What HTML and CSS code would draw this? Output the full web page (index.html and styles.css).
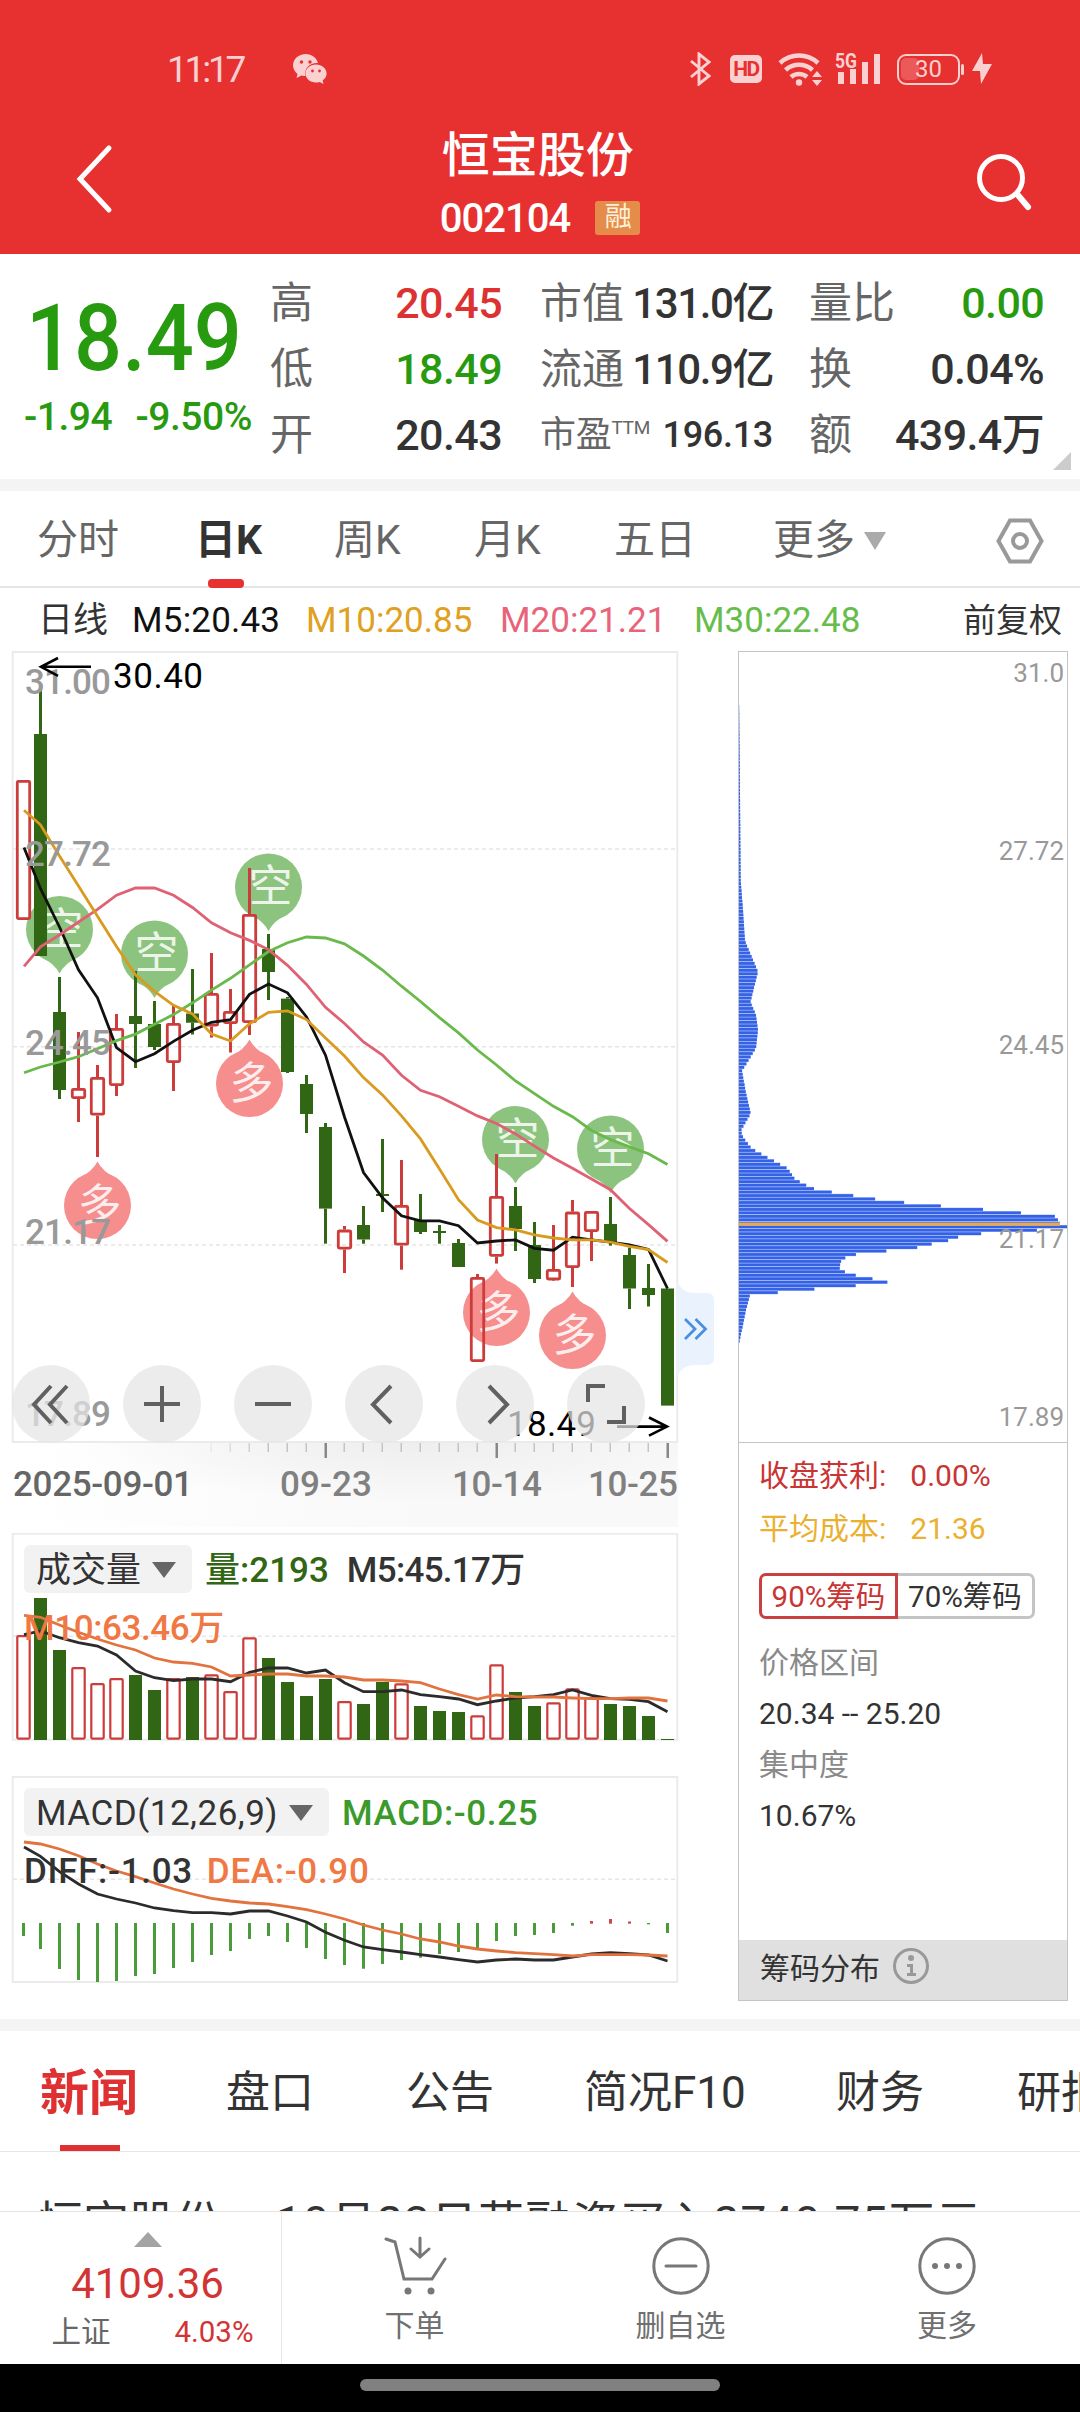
FILE: index.html
```html
<!DOCTYPE html>
<html lang="zh-CN">
<head>
  <meta charset="utf-8">
  <meta name="viewport" content="width=1080">
  <title>恒宝股份 002104</title>
  <link rel="stylesheet" href="styles.css">
</head>
<body>
  <header class="header">
    <div class="status">
      <span class="clock">11:17</span>
      <svg class="wechat" width="34" height="30" viewBox="0 0 34 30">
        <path d="M13 0C5.500 0 0 5 0 11.500c0 3.500 2 6.500 4.500 8.500L3.500 24l5-2.500c1.500.4 3 .5 4 .5C11 14 17 8.500 25 9 23.500 3.500 18.500 0 13 0z"/>
        <path d="M23 10.500c-6 0-10.500 4-10.500 9s4.500 9 10.500 9c1.300 0 2.500-.2 3.600-.6l4 2.100-1-3.500c2.500-1.700 4-4.200 4-7 0-5-4.600-9-10.600-9z"/>
        <g class="eye"><circle cx="8.500" cy="8" r="1.700"/><circle cx="17" cy="8" r="1.700"/><circle cx="19.500" cy="17" r="1.400"/><circle cx="26.500" cy="17" r="1.400"/></g>
      </svg>
      <div class="status-icons">
        <svg width="22" height="34" viewBox="0 0 22 34"><path class="line" d="M1 9l18 15-10 8V2l10 8L1 25" stroke-width="2.900"/></svg>
        <span class="hd">HD</span>
        <svg width="46" height="36" viewBox="0 0 46 36">
          <g class="line" stroke-width="4.600"><path d="M2 12a28 28 0 0 1 38 0"/><path d="M7.500 19a20 20 0 0 1 27 0"/><path d="M13 26a12 12 0 0 1 16 0"/></g>
          <circle cx="21" cy="31.500" r="3.200"/>
          <path d="M34 26l5-6 5 6zM34 29h10l-5 6z"/>
        </svg>
        <svg class="signal" width="47" height="34" viewBox="0 0 47 34">
          <text x="0" y="15.500" textLength="22" lengthAdjust="spacingAndGlyphs">5G</text>
          <path d="M3 20h6v12H3zM15 17h6v15h-6zM27 10h6v22h-6zM39 2h6v30h-6z"/>
        </svg>
        <span class="battery"><i></i>30</span>
        <svg width="20" height="32" viewBox="0 0 20 32"><path d="M10 0L0 18h8l1 13L20 11h-9z"/></svg>
      </div>
    </div>
    <div class="titlebar">
      <svg class="back" width="40" height="70" viewBox="0 0 40 70"><path d="M34 4L5 35l29 31"/></svg>
      <div class="title">
        <h1>恒宝股份</h1>
        <div class="code">002104 <span class="tag">融</span></div>
      </div>
      <svg class="search" width="56" height="58" viewBox="0 0 56 58"><circle cx="24" cy="24" r="21.500"/><path d="M40 40l11 13" stroke-width="6"/></svg>
    </div>
  </header>

  <section class="quote">
    <div class="price">
      <div class="last"><span>18.49</span></div>
      <div class="change"><span>-1.94</span><span>-9.50%</span></div>
    </div>
    <dl>
      <dt>高</dt><dd class="up">20.45</dd>
      <dt>低</dt><dd class="down">18.49</dd>
      <dt>开</dt><dd>20.43</dd>
    </dl>
    <dl class="mid">
      <dt>市值</dt><dd>131.0亿</dd>
      <dt>流通</dt><dd>110.9亿</dd>
      <dt class="small">市盈<sup>TTM</sup></dt><dd class="small">196.13</dd>
    </dl>
    <dl>
      <dt>量比</dt><dd class="down">0.00</dd>
      <dt>换</dt><dd>0.04%</dd>
      <dt>额</dt><dd>439.4万</dd>
    </dl>
  </section>

  <nav class="periods">
    <span>分时</span>
    <span class="active">日K</span>
    <span>周K</span>
    <span>月K</span>
    <span>五日</span>
    <span>更多<i class="caret"></i></span>
    <svg width="48" height="46" viewBox="0 0 48 46"><path d="M14 2.500h20L45.500 23 34 43.500H14L2.500 23z"/><circle cx="24" cy="23" r="7"/></svg>
  </nav>

  <div class="ma">
    <span>日线</span>
    <span class="m5">M5:20.43</span>
    <span class="m10">M10:20.85</span>
    <span class="m20">M20:21.21</span>
    <span class="m30">M30:22.48</span>
    <span class="adjust">前复权</span>
  </div>

  <main class="charts">
    <div class="left">
      <div class="kline">
        <div class="axis-bg"></div>
        <svg id="kline" width="720" height="876" viewBox="0 651 720 876"></svg>
        <div class="controls">
          <button><svg viewBox="0 0 78 78"><path d="M39 21L22 39.500 39 58M55 21L38 39.500 55 58"/></svg></button>
          <button><svg viewBox="0 0 78 78"><path d="M39 21v36M21 39h36"/></svg></button>
          <button><svg viewBox="0 0 78 78"><path d="M21 39h36"/></svg></button>
          <button><svg viewBox="0 0 78 78"><path d="M46 21L28 39.500 46 58"/></svg></button>
          <button><svg viewBox="0 0 78 78"><path d="M33 21l18 18.500L33 58"/></svg></button>
          <button><svg viewBox="0 0 78 78"><path d="M21 37V21h17M57 41v16H40"/></svg></button>
        </div>
        <svg class="expand" width="38" height="96" viewBox="0 0 38 96"><path class="bg" d="M0 0c4 8 8 12 18 12h12q7 0 7 7v58q0 7-7 7H18C8 84 4 88 0 96z"/><path class="arrows" d="M8 38l10 10-10 10M18.500 38l10 10-10 10"/></svg>
      </div>
      <div class="panel volume">
        <svg id="volume" width="720" height="210" viewBox="0 1533 720 210"></svg>
        <div class="row"><span class="chip">成交量<i class="caret"></i></span><span class="vol">量:2193</span><span class="vol-m5">M5:45.17万</span></div>
        <div class="row second"><span class="orange">M10:63.46万</span></div>
      </div>
      <div class="panel macd">
        <svg id="macd" width="720" height="210" viewBox="0 1776 720 210"></svg>
        <div class="row"><span class="chip">MACD(12,26,9)<i class="caret"></i></span><span class="macd-value">MACD:-0.25</span></div>
        <div class="row second"><span>DIFF:-1.03</span><span class="orange">DEA:-0.90</span></div>
      </div>
    </div>
    <aside class="chips">
      <svg id="chips" width="328" height="790" viewBox="739 652 328 790"></svg>
      <div class="stats">
        <p class="profit">收盘获利:<b>0.00%</b></p>
        <p class="cost">平均成本:<b>21.36</b></p>
        <div class="toggle"><span class="on">90%筹码</span><span>70%筹码</span></div>
        <p class="label">价格区间</p>
        <p>20.34 -- 25.20</p>
        <p class="label">集中度</p>
        <p>10.67%</p>
      </div>
      <footer>筹码分布
        <svg width="38" height="38" viewBox="0 0 38 38"><circle class="ring" cx="19" cy="19" r="16.500"/><circle cx="19" cy="11" r="3"/><path d="M15 17h6v9h3v3h-9v-3h3v-6h-3z"/></svg>
      </footer>
    </aside>
  </main>

  <nav class="news-tabs">
    <span class="active">新闻</span>
    <span>盘口</span>
    <span>公告</span>
    <span>简况F10</span>
    <span>财务</span>
    <span>研报</span>
  </nav>
  <div class="headline">恒宝股份，<span>10月23日获融资买入2740.75万元</span></div>

  <footer class="bottom">
    <div class="index">
      <i class="caret-up"></i>
      <strong>4109.36</strong>
      <div><span>上证</span><em>4.03%</em></div>
    </div>
    <div class="action">
      <svg width="64" height="60" viewBox="0 0 64 60"><path d="M3 3l9 3 9 37h28l13-20M37 2v18M28 13l9 8 9-8"/><circle class="dot" cx="25" cy="55" r="3.500"/><circle class="dot" cx="48" cy="55" r="3.500"/></svg>
      <span>下单</span>
    </div>
    <div class="action">
      <svg width="60" height="60" viewBox="0 0 60 60"><circle cx="30" cy="30" r="27.200"/><path d="M15 30h30"/></svg>
      <span>删自选</span>
    </div>
    <div class="action">
      <svg width="60" height="60" viewBox="0 0 60 60"><circle cx="30" cy="30" r="27.200"/><g class="dot"><circle cx="18" cy="30" r="3"/><circle cx="30" cy="30" r="3"/><circle cx="42" cy="30" r="3"/></g></svg>
      <span>更多</span>
    </div>
  </footer>
  <div class="gesture"><i></i></div>
  <script src="chart.js"></script>
</body>
</html>
```
FILE: styles.css
```css
* {
  box-sizing: border-box;
}
html,body {
  margin: 0;
  padding: 0;
}
body {
  display: flex;
  flex-direction: column;
  width: 1080px;
  height: 2412px;
  overflow: hidden;
  font-family: Roboto, "Noto Sans CJK SC", sans-serif;
  color: #333;
  background: #fff;
}
svg {
  display: block;
  flex: none;
}
span {
  white-space: nowrap;
}
.caret {
  display: inline-block;
  border: solid transparent;
  border-top-color: #666;
}

/* header */
.header {
  height: 254px;
  flex: none;
  color: #fff;
  background: #e73030;
}
.status {
  display: flex;
  align-items: center;
  height: 90px;
  padding: 48px 0 0 167px;
  color: #fbd0d0;
}
.status svg {
  fill: #fbd0d0;
}
.status .line {
  fill: none;
  stroke: #fbd0d0;
}
.clock {
  width: 126px;
  font-size: 37px;
  letter-spacing: -3.2px;
}
.wechat .eye {
  fill: #e73030;
}
.status-icons {
  display: flex;
  align-items: center;
  margin-left: 363px;
}
.hd {
  width: 32px;
  height: 28px;
  margin: 0 16px 0 18px;
  border-radius: 5px;
  font: 700 21px/28px Roboto;
  letter-spacing: -1.5px;
  text-align: center;
  color: #e73030;
  background: #fbd0d0;
}
.signal {
  margin: 0 15px 0 11px;
}
.signal text {
  font: 700 20px Roboto;
}
.battery {
  position: relative;
  width: 63px;
  height: 31px;
  margin-right: 12px;
  border: 2px solid #fbd0d0;
  border-radius: 9px;
  font-size: 24px;
  line-height: 27px;
  text-align: center;
}
.battery i {
  position: absolute;
  left: 2px;
  top: 2px;
  width: 18px;
  height: 22px;
  border-radius: 5px;
  background: rgba(255,255,255,.2);
}
.battery::after {
  content: "";
  position: absolute;
  right: -6px;
  top: 8px;
  width: 3px;
  height: 11px;
  border-radius: 2px;
  background: #fbd0d0;
}
.titlebar {
  display: flex;
  justify-content: space-between;
  height: 164px;
  padding: 0 47px 0 75px;
}
.titlebar>svg {
  fill: none;
  stroke: #fff;
  stroke-width: 5;
  stroke-linecap: round;
}
.back {
  margin-top: 54px;
}
.search {
  margin-top: 64px;
}
.title {
  margin-top: 34px;
  padding-right: 10px;
}
h1 {
  margin: 0;
  font-size: 48px;
  font-weight: 500;
  line-height: 64px;
}
.code {
  display: flex;
  align-items: center;
  height: 60px;
  margin-left: -2px;
  font-size: 40px;
  font-weight: 500;
  letter-spacing: -1px;
}
.tag {
  width: 45px;
  height: 34px;
  margin-left: 25px;
  border-radius: 3px;
  font-size: 27px;
  font-weight: 400;
  line-height: 33px;
  text-align: center;
  color: #fff2dc;
  background: #e68c4a;
}

/* quote */
.quote {
  position: relative;
  display: flex;
  height: 237px;
  flex: none;
  padding-top: 16px;
  border-bottom: 12px solid #f4f4f4;
}
.quote::after {
  content: "";
  position: absolute;
  right: 9px;
  bottom: 9px;
  border: 9px solid transparent;
  border-right-color: #ccc;
  border-bottom-color: #ccc;
}
.price {
  width: 271px;
  color: #279a10;
}
.last {
  height: 108px;
  padding: 15px 0 0 26px;
  font-size: 92px;
  font-weight: 500;
  line-height: 108px;
}
.last span {
  display: inline-block;
  transform: scaleX(.92);
  transform-origin: 0 50%;
}
.change {
  display: flex;
  justify-content: space-between;
  padding: 16px 18px 0 24px;
  font-size: 39px;
  font-weight: 500;
  line-height: 46px;
  letter-spacing: -.5px;
}
.quote dl {
  display: grid;
  grid-template-columns: auto auto;
  grid-auto-rows: 66px;
  justify-content: space-between;
  width: 232px;
  margin: 0 39px 0 0;
  font-size: 43px;
  line-height: 67px;
}
.quote .mid {
  grid-template-columns: 80px 152px;
  margin-right: 37px;
}
.quote dt {
  white-space: nowrap;
  color: #666;
}
.quote dd {
  margin: 0 -1px 0 0;
  font-size: 43px;
  font-weight: 500;
  text-align: right;
  letter-spacing: -.6px;
  white-space: nowrap;
}
.quote .mid dt {
  font-size: 42px;
}
.quote .mid dd {
  font-size: 42px;
  letter-spacing: -1.4px;
}
.quote .mid .small {
  font-size: 36px;
  letter-spacing: -.3px;
}
.small sup {
  font-size: 19px;
  line-height: 1;
  vertical-align: 13px;
}
.quote .up {
  color: #dc3232;
}
.quote .down {
  color: #279a10;
}

/* period tabs */
.periods {
  display: grid;
  grid-template-columns: 158px 139px 140px 140px 159px 223px auto;
  align-items: center;
  height: 97px;
  flex: none;
  padding: 0 35px 0 37px;
  border-bottom: 2px solid #e6e6e6;
  font-size: 41px;
  line-height: 99px;
  color: #666;
}
.periods .active {
  position: relative;
  font-weight: 700;
  color: #333;
}
.periods .active::after {
  content: "";
  position: absolute;
  left: 13px;
  bottom: 2px;
  width: 36px;
  height: 9px;
  border-radius: 4px;
  background: #e73030;
}
.periods .caret {
  margin-left: 9px;
  border-width: 18px 11px 0;
  border-top-color: #aaa;
  vertical-align: 4px;
}
.periods svg {
  fill: none;
  stroke: #999;
  stroke-width: 4;
}
.ma {
  display: flex;
  height: 63px;
  flex: none;
  padding: 0 18px 0 38px;
  font-size: 35px;
  line-height: 65px;
}
.ma .m5 {
  width: 149px;
  margin: 0 25px 0 24px;
  letter-spacing: .2px;
  color: #111;
}
.ma .m10 {
  width: 170px;
  margin-right: 24px;
  color: #e0a020;
}
.ma .m20 {
  width: 170px;
  margin-right: 24px;
  color: #e8647a;
}
.ma .m30 {
  color: #67bd4b;
}
.ma .adjust {
  margin-left: auto;
  font-size: 33px;
}

/* charts */
.charts {
  display: flex;
  height: 1380px;
  flex: none;
  border-bottom: 12px solid #f4f4f4;
}
.left {
  width: 738px;
}
.kline {
  position: relative;
  height: 882px;
}
#kline {
  position: relative;
}
.axis-bg {
  position: absolute;
  left: 12px;
  top: 791px;
  width: 666px;
  height: 85px;
  background:
    radial-gradient(ellipse 330px 60px at 400px 0, #eee, rgba(240,240,240,0)),
    linear-gradient(90deg, #fff, #f9f9f9 60%);
}
.controls {
  position: absolute;
  left: 12px;
  top: 714px;
  display: flex;
  gap: 33px;
}
.controls button {
  width: 78px;
  height: 78px;
  padding: 0;
  border: 0;
  border-radius: 50%;
  background: rgba(229,229,229,.72);
}
.controls path {
  fill: none;
  stroke: #606060;
  stroke-width: 4;
}
.expand {
  position: absolute;
  left: 677px;
  top: 630px;
}
.expand .bg {
  fill: #eaf3fd;
}
.expand .arrows {
  fill: none;
  stroke: #4a90e2;
  stroke-width: 2.8;
}
.panel {
  position: relative;
  height: 208px;
  padding: 12px 0 0 24px;
}
.panel>svg {
  position: absolute;
  left: 0;
  top: 0;
}
.macd {
  margin-top: 35px;
}
.row {
  position: relative;
  display: flex;
  height: 48px;
  font-size: 35px;
  font-weight: 500;
  line-height: 51px;
}
.row.second {
  margin-top: 10px;
  gap: 14px;
  letter-spacing: -.4px;
}
.chip {
  height: 48px;
  margin-right: 13px;
  padding: 0 16px 0 12px;
  border-radius: 6px;
  font-weight: 400;
  background: #f2f2f2;
}
.chip .caret {
  margin-left: 11px;
  border-width: 16px 12px 0;
  vertical-align: 4px;
}
.vol {
  margin-right: 18px;
  color: #316614;
}
.vol-m5 {
  letter-spacing: -.7px;
}
.macd .chip {
  letter-spacing: .5px;
}
.macd-value {
  letter-spacing: .6px;
  color: #3a9a2a;
}
.macd .second {
  letter-spacing: .7px;
}
.orange {
  color: #ef7844;
}
#kline .axis {
  font: 500 35px Roboto;
  fill: #999;
}
#kline .date {
  font: 500 35px Roboto;
  fill: #808080;
}
#kline .date.first {
  fill: #666;
}
#kline .extreme {
  font: 400 35px Roboto;
  fill: #000;
}
#kline .mark {
  font: 400 44px "Noto Sans CJK SC";
  fill: #fff;
  fill-opacity: .85;
  text-anchor: middle;
}
#chips text {
  font: 400 26px Roboto;
  fill: #999;
  text-anchor: end;
}

/* cost distribution */
.chips {
  display: flex;
  flex-direction: column;
  width: 330px;
  height: 1350px;
  border: 1px solid #c4c4c4;
}
.stats {
  flex: 1;
  padding: 7px 0 0 20px;
  border-top: 1px solid #c4c4c4;
  font-size: 30px;
}
.stats p {
  height: 51px;
  margin: 0;
  line-height: 51px;
}
.stats .profit,.stats .cost {
  height: 53px;
}
.stats b {
  margin-left: 24px;
  font-weight: 400;
}
.profit {
  color: #c93434;
}
.cost {
  color: #eab02f;
}
.stats .label {
  color: #8a8a8a;
}
.toggle {
  display: flex;
  width: 276px;
  height: 46px;
  margin: 17px 0 18px;
  font-size: 29.5px;
}
.toggle span {
  width: 138px;
  border: 3px solid #c4c4c4;
  border-left: 0;
  border-radius: 0 7px 7px 0;
  line-height: 42px;
  text-align: center;
}
.toggle .on {
  width: 140px;
  border: 3px solid #c84040;
  border-radius: 7px 0 0 7px;
  color: #c93434;
}
.chips footer {
  display: flex;
  align-items: center;
  gap: 12px;
  height: 60px;
  padding: 0 0 9px 21px;
  font-size: 30px;
  background: #e0e0e0;
}
.chips footer svg {
  fill: #999;
}
.chips footer .ring {
  fill: none;
  stroke: #999;
  stroke-width: 3;
}

/* news */
.news-tabs {
  display: grid;
  grid-template-columns: 186px 180px 178px 252px 181px auto;
  grid-template-rows: 120px;
  height: 121px;
  flex: none;
  padding-left: 40px;
  border-bottom: 1px solid #e6e6e6;
  font-size: 44px;
  line-height: 125px;
}
.news-tabs .active {
  position: relative;
  font-size: 49px;
  font-weight: 700;
  color: #df3131;
}
.news-tabs .active::after {
  content: "";
  position: absolute;
  left: 20px;
  bottom: 0;
  width: 60px;
  height: 6px;
  background: #df3131;
}
.headline {
  height: 59px;
  flex: none;
  padding: 41px 0 0 37px;
  font-size: 46px;
  line-height: 60px;
  white-space: nowrap;
  overflow: hidden;
}
.headline span {
  margin-left: 9px;
  letter-spacing: 1.1px;
}

/* bottom bar */
.bottom {
  display: grid;
  grid-template-columns: 282px 265px 267px 266px;
  height: 153px;
  flex: none;
  border-top: 1px solid #e4e4e4;
  background: #fff;
}
.index {
  display: flex;
  flex-direction: column;
  align-items: center;
  padding-top: 20px;
  border-right: 1px solid #e8e8e8;
  color: #d23434;
}
.caret-up {
  margin-left: 14px;
  border: 14px solid transparent;
  border-top: 0;
  border-bottom: 15px solid #a4a4a4;
}
.index strong {
  margin: 13px 0 0 14px;
  font-size: 42px;
  font-weight: 400;
  line-height: 48px;
}
.index div {
  display: flex;
  justify-content: space-between;
  width: 202px;
  margin-left: 24px;
  font-size: 29.5px;
  line-height: 49px;
}
.index div span {
  color: #666;
}
.index em {
  font-style: normal;
}
.action {
  display: flex;
  flex-direction: column;
  align-items: center;
  padding-top: 24px;
  font-size: 30px;
  line-height: 60px;
  color: #707070;
}
.action svg {
  fill: none;
  stroke: #777;
  stroke-width: 3;
  stroke-linecap: round;
}
.action .dot {
  fill: #777;
  stroke: none;
}
.gesture {
  display: flex;
  justify-content: center;
  height: 48px;
  flex: none;
  padding-top: 15px;
  background: #000;
}
.gesture i {
  width: 360px;
  height: 12px;
  border-radius: 6px;
  background: #808080;
}
```
FILE: chart.js
```js
var RED = '#cb3c3a', GREEN = '#316614';

function cx(i) {
  return i ? 21.5 + 19 * i : 23.5;
}
function points(ys) {
  return ys.map(function (y, i) { return (i ? cx(i) : 24) + ',' + y; }).join(' ');
}
function polyline(ys, color) {
  return '<polyline fill="none" stroke="' + color + '" stroke-width="2.8" points="' + points(ys) + '"/>';
}
function rect(x, y, w, h, attrs) {
  return '<rect x="' + x + '" y="' + y + '" width="' + w + '" height="' + h + '" ' + attrs + '/>';
}
function bar(i, top, bottom, red) {
  if (red) {
    return rect(cx(i) - 6.2, top + 1.4, 12.4, Math.max(bottom - top - 2.8, 1),
      'fill="none" stroke="' + RED + '" stroke-width="2.8" rx="1"');
  }
  return rect(cx(i) - 6.5, top, 13, bottom - top, 'fill="' + GREEN + '"');
}
function frame(y, h) {
  return rect(12.7, y, 664.6, h, 'fill="none" stroke="#ebebeb" stroke-width="2"');
}
function grid(y) {
  return '<path d="M13 ' + y + 'H677" stroke="#e6e6e6" stroke-width="1.5" stroke-dasharray="4 3"/>';
}
function text(x, y, s, cls, len) {
  return '<text x="' + x + '" y="' + y + '" class="' + cls + '"' +
    (len ? ' textLength="' + len + '"' : '') + '>' + s + '</text>';
}

// [high, body top, body bottom, low, is red]
var candles = [
  [780, 780, 920, 920, 1], [688, 734, 956, 956, 0], [977, 1012, 1090, 1099, 0], [1032, 1088, 1099, 1122, 1],
  [1065, 1077, 1115.6, 1157, 1], [1014, 1028, 1086, 1096, 1], [971, 1016, 1024, 1068, 0], [1001, 1024, 1047, 1050, 0],
  [1005, 1023, 1063, 1091, 1], [969, 1013.5, 1022.7, 1034.5, 0], [953, 993, 1026.5, 1037.6, 1], [989, 1011, 1024, 1052.5, 1],
  [868, 914, 1023, 1035, 1], [934, 949, 972, 1000, 0], [997, 998.6, 1072, 1073, 0], [1075, 1084, 1114, 1133, 0],
  [1123, 1127, 1208.6, 1243.7, 0], [1226, 1229.6, 1249.5, 1273, 1], [1206, 1225, 1239.5, 1243.7, 0], [1139, 1194, 1196, 1212, 0],
  [1160, 1205, 1245.6, 1269.7, 1], [1194, 1220, 1232, 1234, 0], [1225, 1231, 1233, 1243.7, 0], [1239, 1243, 1267, 1267, 0],
  [1274, 1277, 1362, 1362, 1], [1154, 1196, 1256.7, 1263.6, 1], [1187, 1206, 1229, 1251, 0], [1222, 1245, 1279, 1283, 0],
  [1225, 1269, 1280.4, 1281, 1], [1200, 1211.6, 1268, 1287, 1], [1211, 1211, 1232, 1261, 1], [1197, 1224, 1243, 1245.6, 0],
  [1247.5, 1255, 1288.5, 1309, 0], [1264, 1288, 1295, 1306.5, 0], [1288.5, 1288.5, 1405.6, 1405.6, 0]
];
var ma = {
  '#111111': [847.4,888.7,927,969.9,997.8,1047.5,1061.7,1053.7,1041.4,1030.3,1022.3,1019.6,994.3,984,992.8,1016.9,1055.2,1117,1172.5,1197.8,1215.8,1220.8,1220.8,1225.7,1243,1241,1239.9,1248.3,1250.2,1237.2,1239.9,1242.2,1244.9,1249.5,1288.5],
  '#69b94b': [1072.8,1067,1062,1056.7,1048.7,1040.6,1034.1,1024.2,1014.6,1002.8,990.1,978.3,964.9,951.5,942.7,937,938,943.8,956,970,986.2,1001.5,1017.6,1032.9,1050,1065,1081,1093.7,1106.3,1116.7,1130.5,1139.6,1146.9,1153.8,1164.5],
  '#df6274': [966.4,946.9,935,922,909.4,895.2,888,888,895.2,907.5,922.8,932.7,940.4,949.6,965.3,984.4,1007.3,1023.5,1042,1055,1075.3,1090.3,1096.8,1106.3,1115.9,1123.5,1133.9,1146.1,1158,1168.3,1179,1189.7,1208.5,1224.6,1241.4],
  '#d99a20': [810.3,824.8,856,886,916.3,946.5,974.8,991.3,1005.4,1013.9,1034,1041,1023.8,1012.3,1010.8,1019.6,1038,1056,1077.6,1094.9,1115.9,1138.9,1169,1199.7,1220,1227.6,1229.9,1234.9,1238,1239.9,1239.9,1242.2,1246.4,1249.5,1262.5]
};

// tip y; pins point down for 空, up for 多
function pin(i, tip, buy) {
  var x = cx(i), d = buy ? 1 : -1, cy = tip + 44 * d;
  return '<g fill="' + (buy ? '#f68e8e' : '#8cc47f') + '"><circle cx="' + x + '" cy="' + cy + '" r="33.5"/>' +
    '<path d="M' + (x - 19) + ' ' + (cy - 27 * d) + 'Q' + (x - 5) + ' ' + (tip + 10 * d) + ' ' + x + ' ' + tip +
    'Q' + (x + 5) + ' ' + (tip + 10 * d) + ' ' + (x + 19) + ' ' + (cy - 27 * d) + 'z"/></g>' +
    text(x + 2, cy + 15, buy ? '多' : '空', 'mark');
}

var k = frame(652, 790) + grid(849) + grid(1046.8) + grid(1244.9);
[[2, 973.5], [7, 998], [13, 931], [26, 1183.5], [31, 1193]].forEach(function (p) { k += pin(p[0], p[1], false); });
[[4, 1161.5], [12, 1039.5], [25, 1268.5], [29, 1291.5]].forEach(function (p) { k += pin(p[0], p[1], true); });
candles.forEach(function (c, i) {
  var color = c[4] ? RED : GREEN;
  k += rect(cx(i) - 1.5, c[0], 3, c[1] - c[0], 'fill="' + color + '"');
  k += rect(cx(i) - 1.5, c[2], 3, c[3] - c[2], 'fill="' + color + '"');
  k += bar(i, c[1], c[2], c[4]);
});
Object.keys(ma).forEach(function (color) { k += polyline(ma[color], color); });
[['31.00', 693.5], ['27.72', 866], ['24.45', 1055], ['21.17', 1244], ['17.89', 1425.5]].forEach(function (a) {
  k += text(25, a[1], a[0], 'axis', 86);
});
k += text(113, 688, '30.40', 'extreme', 90) + text(507, 1435.5, '18.49', 'extreme', 89);
k += '<path d="M91 666.800H41M58 658L41 666.800l17 9M617 1426.600h50M649 1417.500l18 9.100-18 9" fill="none" stroke="#000" stroke-width="2.600"/>';
for (var t = 10; t < 35; t++) {
  var major = t === 16 || t === 25 || t === 34;
  k += rect(cx(t) - 1, 1443, major ? 2.5 : 1.5, major ? 15 : 9,
    'fill="' + (major ? '#888' : '#c4c4c4') + '" opacity="' + Math.min(1, (t - 9) / 4) + '"');
}
k += text(13, 1495.5, '2025-09-01', 'date first', 180);
k += text(280, 1495.5, '09-23', 'date', 92) + text(452, 1495.5, '10-14', 'date', 90) + text(588, 1495.5, '10-25', 'date', 90);
document.getElementById('kline').innerHTML = k;

// negative tops are red bars
var volume = [-1634.7,1598,1650,-1666.7,-1682.7,-1677.7,1675,1690,-1677.7,1677,-1674,-1690.7,-1637,1658,1682,1696,1679,-1700.7,1704,1682,-1683,1706,1711,1712,-1715,-1664,1692,1706,-1702,-1688,-1696.7,1704,1706,1716,1739];
var v = frame(1533.7, 206) + grid(1636.3);
volume.forEach(function (y, i) { v += bar(i, Math.abs(y), 1740, y < 0).replace('stroke-width="2.8"', 'stroke-width="2.2"'); });
v += polyline([1634.7,1631,1637.7,1642.7,1646,1655,1671,1677.7,1680.7,1679,1679,1681.7,1672.3,1668,1668,1673,1670,1682.7,1691.7,1691.7,1690,1694.7,1696.7,1699,1704.7,1701,1698,1696.7,1694.7,1690,1695.3,1698.7,1699.3,1701.7,1711.7], '#2b2b2b');
v += polyline([1615.3,1617.3,1625,1632.3,1639,1645,1650,1658,1662,1663.3,1667,1676,1675,1674,1674,1676,1676,1677,1680,1680,1681,1682.7,1689,1694.7,1699,1695,1696.7,1697,1697,1698,1698.7,1698.7,1698,1698,1701], '#e2733f');
document.getElementById('volume').innerHTML = v;

var hist = [1936,1949,1969,1980,1982,1981,1976,1974,1968,1962,1955,1951,1939,1936,1942,1948,1959,1965,1968.7,1964,1960,1957.7,1954,1952,1950,1941,1936,1935,1933,1925.7,1921,1919,1921.5,1924.3,1933];
var m = frame(1777, 205) + grid(1879.3);
hist.forEach(function (y, i) {
  m += y < 1923 ? rect(cx(i) - 1.5, y, 3, 1923.7 - y, 'fill="#cb4a48"') : rect(cx(i) - 1.5, 1923, 3, y - 1923, 'fill="#4a9c3a"');
});
m += polyline([1847,1856.3,1871.7,1884,1894,1899,1903,1908,1910.7,1912.7,1912.7,1914,1911,1911,1916,1922,1932.3,1940.3,1947,1949.7,1952,1954.7,1957,1959.7,1962,1960,1959,1960,1960,1957,1954,1952.7,1953.7,1955,1961], '#2b2b2b');
m += polyline([1842,1844,1849,1855.7,1864,1871,1876.7,1883,1889,1894,1898.3,1901,1903,1904,1906.7,1909.7,1914,1919,1925,1930,1934,1939,1942,1946,1949,1951,1952.7,1953.7,1954.7,1956,1954.7,1954.7,1954.7,1955,1956], '#e2733f');
document.getElementById('macd').innerHTML = m;

// cost distribution, [y, bar length] with linear steps between
var profile = [[706,.2],[793,1],[880,1.7],[910,4],[941,6],[971.6,19],[1002,11.5],[1015,17],[1030,19],[1048,17],[1071,3],[1091.5,6.7],[1113.5,11.7],[1131,1.7],[1137.5,4.3],[1147.7,12],[1151,17],[1154.3,23],[1157.9,29.3],[1161.4,36],[1165,42.3],[1168.6,49],[1172,51],[1175.2,53.3],[1178.8,55.7],[1181.8,61],[1185.4,67.7],[1189,76],[1192.6,95.7],[1196,117.3],[1199.7,140.7],[1202.8,168.3],[1206.3,206],[1209.4,244.3],[1213,283.7],[1216.5,317.7],[1220,319],[1223.7,321],[1226.7,328],[1230.3,296.7],[1233.9,237.7],[1237.5,216.7],[1241,208],[1244,192.7],[1247.7,177.3],[1251.2,145],[1254.3,117.3],[1257.9,106.3],[1261.4,102],[1265,101],[1268.6,100.7],[1272,106.3],[1275.7,118.3],[1278.8,134],[1282.3,149],[1285.9,113.7],[1289,76],[1292.6,38],[1296,10.7],[1310,7],[1344,0]];
function length(y) {
  for (var i = 1; i < profile.length; i++) {
    var a = profile[i - 1], b = profile[i];
    if (y <= b[0]) return a[1] + (b[1] - a[1]) * (y - a[0]) / (b[0] - a[0]);
  }
  return 0;
}
var c = '';
for (var n = -150; n < 36; n++) {
  var y = 1226.7 + n * 3.465;
  if (y > 706 && y < 1344) {
    c += rect(739, y - 1.75, length(y).toFixed(1), 3.5, 'fill="#9db8f8"') +
      rect(739, y - 1.3, length(y).toFixed(1), 2.7, 'fill="#3461e6"');
  }
}
c += rect(739, 1222.5, 321, 3.4, 'fill="#e3aa58"');
[['31.0', 681.8], ['27.72', 859.9], ['24.45', 1053.8], ['21.17', 1248.2], ['17.89', 1426.2]].forEach(function (a) {
  c += text(1064, a[1], a[0], '');
});
document.getElementById('chips').innerHTML = c;
```
